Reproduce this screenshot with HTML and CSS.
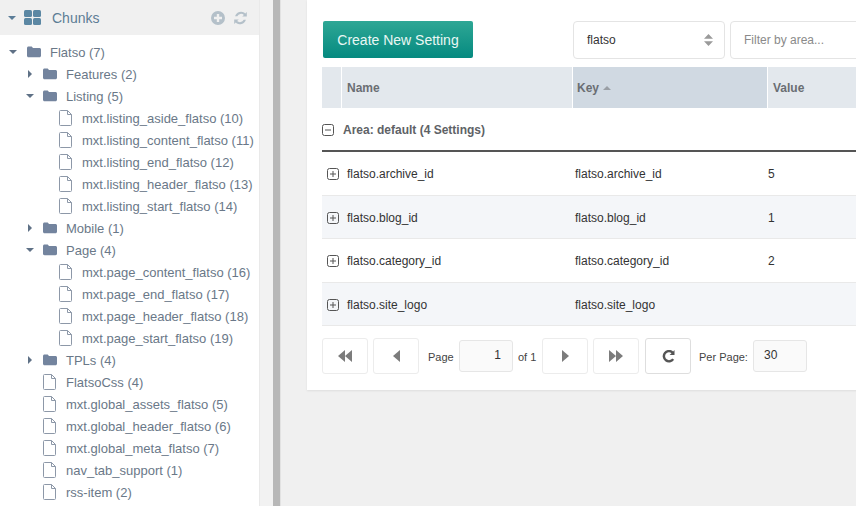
FILE: index.html
```html
<!DOCTYPE html>
<html lang="en">
<head>
  <meta charset="UTF-8" />
  <title>System Settings</title>
  <link rel="stylesheet" href="styles.css">
</head>
<body>
  <svg class="sprites" width="0" height="0">
    <symbol id="folder" viewBox="0 0 14 12"><path d="M1.500 1h3.200l1.300 1.600h6.500c.8 0 1.500.7 1.500 1.500v6.100c0 .8-.7 1.500-1.500 1.500h-11C.7 11.700 0 11 0 10.200V2.500C0 1.700.7 1 1.500 1z"/></symbol>
    <symbol id="file" viewBox="0 0 14 16"><path d="M1.500.5h7l4 4v10a1 1 0 0 1-1 1h-10a1 1 0 0 1-1-1v-13a1 1 0 0 1 1-1zM8.500.5v4h4"/></symbol>
    <symbol id="plus-box" viewBox="0 0 12 12"><rect x=".5" y=".5" width="11" height="11" rx="2"/><path d="M3 6h6M6 3v6"/></symbol>
  </svg>

  <aside class="sidebar">
    <div class="tree-head">
      <span class="caret down head-caret"></span>
      <svg class="grid-icon" width="17" height="15" viewBox="0 0 17 15"><rect width="8" height="7" rx="1.500"/><rect x="9" width="8" height="7" rx="1.500"/><rect y="8" width="8" height="7" rx="1.500"/><rect x="9" y="8" width="8" height="7" rx="1.500"/></svg>
      <span class="tree-title">Chunks</span>
      <svg class="head-tool" width="14" height="14" viewBox="0 0 14 14"><path d="M7 0a7 7 0 1 0 0 14A7 7 0 0 0 7 0zm1.200 3v2.800H11v2.400H8.200V11H5.800V8.200H3V5.800h2.800V3z"/></svg>
      <svg class="head-tool" width="15" height="14" viewBox="0 0 15 14"><path d="M13.800 1v4.600H9.200l1.700-1.700a4.200 4.200 0 0 0-6.600 1.300H2.100A6.200 6.200 0 0 1 12.300 2.500zM1.200 13V8.400h4.600L4.100 10.100a4.200 4.200 0 0 0 6.600-1.300h2.200A6.200 6.200 0 0 1 2.700 11.500z"/></svg>
    </div>
    <ul class="tree">
      <li class="lvl0"><span class="caret down"></span><svg class="ico folder"><use href="#folder"/></svg>Flatso (7)</li>
      <li class="lvl1"><span class="caret right"></span><svg class="ico folder"><use href="#folder"/></svg>Features (2)</li>
      <li class="lvl1"><span class="caret down"></span><svg class="ico folder"><use href="#folder"/></svg>Listing (5)</li>
      <li class="lvl2"><svg class="ico file"><use href="#file"/></svg>mxt.listing_aside_flatso (10)</li>
      <li class="lvl2"><svg class="ico file"><use href="#file"/></svg>mxt.listing_content_flatso (11)</li>
      <li class="lvl2"><svg class="ico file"><use href="#file"/></svg>mxt.listing_end_flatso (12)</li>
      <li class="lvl2"><svg class="ico file"><use href="#file"/></svg>mxt.listing_header_flatso (13)</li>
      <li class="lvl2"><svg class="ico file"><use href="#file"/></svg>mxt.listing_start_flatso (14)</li>
      <li class="lvl1"><span class="caret right"></span><svg class="ico folder"><use href="#folder"/></svg>Mobile (1)</li>
      <li class="lvl1"><span class="caret down"></span><svg class="ico folder"><use href="#folder"/></svg>Page (4)</li>
      <li class="lvl2"><svg class="ico file"><use href="#file"/></svg>mxt.page_content_flatso (16)</li>
      <li class="lvl2"><svg class="ico file"><use href="#file"/></svg>mxt.page_end_flatso (17)</li>
      <li class="lvl2"><svg class="ico file"><use href="#file"/></svg>mxt.page_header_flatso (18)</li>
      <li class="lvl2"><svg class="ico file"><use href="#file"/></svg>mxt.page_start_flatso (19)</li>
      <li class="lvl1"><span class="caret right"></span><svg class="ico folder"><use href="#folder"/></svg>TPLs (4)</li>
      <li class="lvl1 leaf"><svg class="ico file"><use href="#file"/></svg>FlatsoCss (4)</li>
      <li class="lvl1 leaf"><svg class="ico file"><use href="#file"/></svg>mxt.global_assets_flatso (5)</li>
      <li class="lvl1 leaf"><svg class="ico file"><use href="#file"/></svg>mxt.global_header_flatso (6)</li>
      <li class="lvl1 leaf"><svg class="ico file"><use href="#file"/></svg>mxt.global_meta_flatso (7)</li>
      <li class="lvl1 leaf"><svg class="ico file"><use href="#file"/></svg>nav_tab_support (1)</li>
      <li class="lvl1 leaf"><svg class="ico file"><use href="#file"/></svg>rss-item (2)</li>
    </ul>
  </aside>
  <div class="gutter"></div>
  <div class="splitter"></div>

  <main class="content">
    <section class="panel">
      <div class="toolbar">
        <button class="btn-create">Create New Setting</button>
        <div class="namespace">flatso
          <svg class="updown" width="9" height="12" viewBox="0 0 9 12"><path d="M4.500 0L9 4.800H0zM4.500 12L0 7.200h9z"/></svg>
        </div>
        <div class="filter">Filter by area...</div>
      </div>

      <div class="grid-head">
        <div class="col-exp"></div>
        <div class="col-name">Name</div>
        <div class="col-key sorted">Key <span class="sort-up"></span></div>
        <div class="col-value">Value</div>
      </div>

      <div class="group-row">
        <svg class="box group-box" width="12" height="12" viewBox="0 0 12 12"><rect x=".5" y=".5" width="11" height="11" rx="2"/><path d="M3 6h6"/></svg>
        Area: default (4 Settings)
      </div>

      <div class="row">
        <svg class="box" width="12" height="12"><use href="#plus-box"/></svg>
        <div class="cell-name">flatso.archive_id</div><div class="cell-key">flatso.archive_id</div><div class="cell-value">5</div>
      </div>
      <div class="row alt">
        <svg class="box" width="12" height="12"><use href="#plus-box"/></svg>
        <div class="cell-name">flatso.blog_id</div><div class="cell-key">flatso.blog_id</div><div class="cell-value">1</div>
      </div>
      <div class="row">
        <svg class="box" width="12" height="12"><use href="#plus-box"/></svg>
        <div class="cell-name">flatso.category_id</div><div class="cell-key">flatso.category_id</div><div class="cell-value">2</div>
      </div>
      <div class="row alt">
        <svg class="box" width="12" height="12"><use href="#plus-box"/></svg>
        <div class="cell-name">flatso.site_logo</div><div class="cell-key">flatso.site_logo</div><div class="cell-value"></div>
      </div>

      <div class="pager">
        <button class="pg-btn"><svg width="14" height="12" viewBox="0 0 14 12"><path d="M7 0v12L0 6zM14 0v12L7 6z"/></svg></button>
        <button class="pg-btn"><svg width="7" height="12" viewBox="0 0 7 12"><path d="M7 0v12L0 6z"/></svg></button>
        <span class="pg-label page-word">Page</span>
        <div class="pg-input page-num">1</div>
        <span class="pg-label of-word">of 1</span>
        <button class="pg-btn"><svg width="7" height="12" viewBox="0 0 7 12"><path d="M0 0v12l7-6z"/></svg></button>
        <button class="pg-btn"><svg width="14" height="12" viewBox="0 0 14 12"><path d="M0 0v12l7-6zM7 0v12l7-6z"/></svg></button>
        <button class="pg-btn refresh"><svg width="13" height="13" viewBox="0 0 13 13"><path d="M12.500 0v5H7.600l1.900-1.800A3.900 3.900 0 1 0 10.200 8.500l2 1.200A6.300 6.300 0 1 1 11.200 1.500z"/></svg></button>
        <span class="pg-label per-word">Per Page:</span>
        <div class="pg-input per-num">30</div>
      </div>
    </section>
  </main>
</body>
</html>
```

FILE: styles.css
```css
html, body {
  margin: 0;
  height: 506px;
  overflow: hidden;
}
body {
  display: flex;
  font-family: "Liberation Sans", Arial, sans-serif;
  font-size: 13px;
  background: #f0f0f0;
  color: #333;
}
.sprites {
  position: absolute;
}

/* Left tree */
.sidebar {
  width: 259px;
  flex: none;
  background: #fff;
  overflow: hidden;
}
.tree-head {
  height: 35px;
  background: #f0f0f0;
  display: flex;
  align-items: center;
  padding: 0 11px 0 8px;
  box-sizing: border-box;
}
.head-caret {
  margin-right: 8px;
  border-top-color: #5b7d98 !important;
}
.grid-icon {
  fill: #5b87a3;
  margin-right: 11px;
}
.tree-title {
  font-size: 14px;
  color: #5d7d95;
  flex: 1;
}
.head-tool {
  fill: #b4c0c9;
  margin-left: 8px;
}
.tree {
  list-style: none;
  margin: 0;
  padding: 6px 0 0;
}
.tree li {
  height: 22px;
  display: flex;
  align-items: center;
  white-space: nowrap;
  color: #6a7888;
  position: relative;
}
.lvl0 { padding-left: 50px; }
.lvl1 { padding-left: 66px; }
.lvl2 { padding-left: 82px; }
.caret {
  position: absolute;
  width: 0;
  height: 0;
}
.head-caret {
  position: static;
}
.caret.down {
  border-left: 4px solid transparent;
  border-right: 4px solid transparent;
  border-top: 4px solid #5f7186;
}
.caret.right {
  border-top: 4px solid transparent;
  border-bottom: 4px solid transparent;
  border-left: 4px solid #5f7186;
}
.lvl0 .caret { left: 9px; top: 9px; }
.lvl1 .caret.down { left: 26px; top: 9px; }
.lvl1 .caret.right { left: 28px; top: 7px; }
.ico {
  position: absolute;
  width: 14px;
  height: 16px;
}
.folder {
  fill: #73849e;
  height: 13px;
  top: 4px;
}
.file {
  fill: none;
  stroke: #8d98a8;
  stroke-width: 1;
  top: 3px;
}
.lvl0 .ico { left: 27px; }
.lvl1 .ico { left: 43px; }
.lvl2 .ico { left: 59px; }

.gutter {
  width: 14px;
  flex: none;
  background: #f2f2f2;
  box-shadow: inset 1px 0 0 #e9e9e9;
}
.splitter {
  width: 8px;
  flex: none;
  background: #b8b8b8;
  border-right: 1px solid #e2e2e2;
  box-sizing: border-box;
}

/* Main panel */
.content {
  flex: 1;
  min-width: 0;
  padding-left: 26px;
  overflow: hidden;
}
.panel {
  width: 640px;
  height: 390px;
  box-sizing: border-box;
  background: #fff;
  padding: 21px 0 0 15px;
  box-shadow: 0 1px 2px rgba(0,0,0,0.08);
}
.toolbar {
  display: flex;
  height: 37px;
  margin-bottom: 9px;
}
.btn-create {
  width: 150px;
  height: 37px;
  flex: none;
  padding: 0;
  border: none;
  border-radius: 2px;
  background: linear-gradient(#2ea795, #058a80);
  color: #e9f7f4;
  font: 14px "Liberation Sans", Arial, sans-serif;
  margin-left: 1px;
}
.namespace, .filter {
  height: 38px;
  flex: none;
  box-sizing: border-box;
  border: 1px solid #e4e4e4;
  border-radius: 4px;
  display: flex;
  align-items: center;
  font-size: 12px;
  padding-left: 13px;
}
.namespace {
  width: 152px;
  margin-left: 100px;
  color: #333;
  justify-content: space-between;
  padding-right: 11px;
}
.updown {
  fill: #9a9a9a;
}
.filter {
  width: 200px;
  margin-left: 5px;
  color: #8a8a8a;
}
.grid-head {
  display: flex;
  height: 41px;
  font-size: 12px;
  font-weight: bold;
  color: #6a6e73;
}
.grid-head > div {
  flex: none;
  background: #e3e8ed;
  display: flex;
  align-items: center;
  padding-left: 5px;
  box-sizing: border-box;
  margin-right: 1px;
}
.grid-head .col-exp { width: 19px; padding: 0; }
.grid-head .col-name { width: 230px; }
.grid-head .col-key { width: 194px; padding-left: 4px; }
.grid-head .col-value { width: 200px; margin: 0; }
.grid-head .sorted { background: #d0d9e2; }
.sort-up {
  width: 0;
  height: 0;
  margin-left: 4px;
  border-left: 4px solid transparent;
  border-right: 4px solid transparent;
  border-bottom: 4px solid #9a9fa5;
}
.group-row {
  height: 44px;
  box-sizing: border-box;
  border-bottom: 2px solid #555;
  display: flex;
  align-items: center;
  font-size: 12px;
  font-weight: bold;
  color: #5e6266;
  padding-top: 1px;
}
.box {
  fill: none;
  stroke: #555;
  stroke-width: 1;
  flex: none;
}
.group-box {
  margin-right: 9px;
}
.row {
  height: 43.500px;
  box-sizing: border-box;
  border-bottom: 1px solid #e9e9e9;
  display: flex;
  align-items: center;
  font-size: 12px;
  color: #333;
  padding: 2px 0 0 5px;
}
.row.alt {
  background: #f4f6f9;
}
.cell-name {
  width: 228px;
  margin-left: 8px;
}
.cell-key {
  width: 193px;
}
.pager {
  display: flex;
  align-items: flex-start;
  margin-top: 12px;
  font-size: 11px;
}
.pg-btn {
  width: 46px;
  height: 36px;
  flex: none;
  padding: 0;
  background: #fff;
  border: 1px solid #ececec;
  border-radius: 3px;
  margin-right: 5px;
  display: flex;
  align-items: center;
  justify-content: center;
}
.pg-btn svg {
  fill: #7c7c7c;
}
.pg-btn.refresh {
  border-color: #dedede;
  margin-left: 1px;
}
.pg-btn.refresh svg {
  fill: #555;
}
.pg-label {
  flex: none;
  white-space: nowrap;
  line-height: 38px;
  color: #444;
}
.pg-input {
  height: 32px;
  flex: none;
  box-sizing: border-box;
  margin-top: 2px;
  background: #fafafa;
  border: 1px solid #e6e6e6;
  border-radius: 3px;
  font-size: 12px;
  line-height: 29px;
  color: #333;
}
.page-word { width: 26px; margin-left: 4px; margin-right: 5px; }
.page-num { width: 54px; text-align: right; padding-right: 11px; }
.of-word { width: 18px; margin-left: 5px; margin-right: 6px; }
.per-word { width: 48px; margin-left: 3px; margin-right: 6px; }
.per-num { width: 54px; padding-left: 10px; }
```
